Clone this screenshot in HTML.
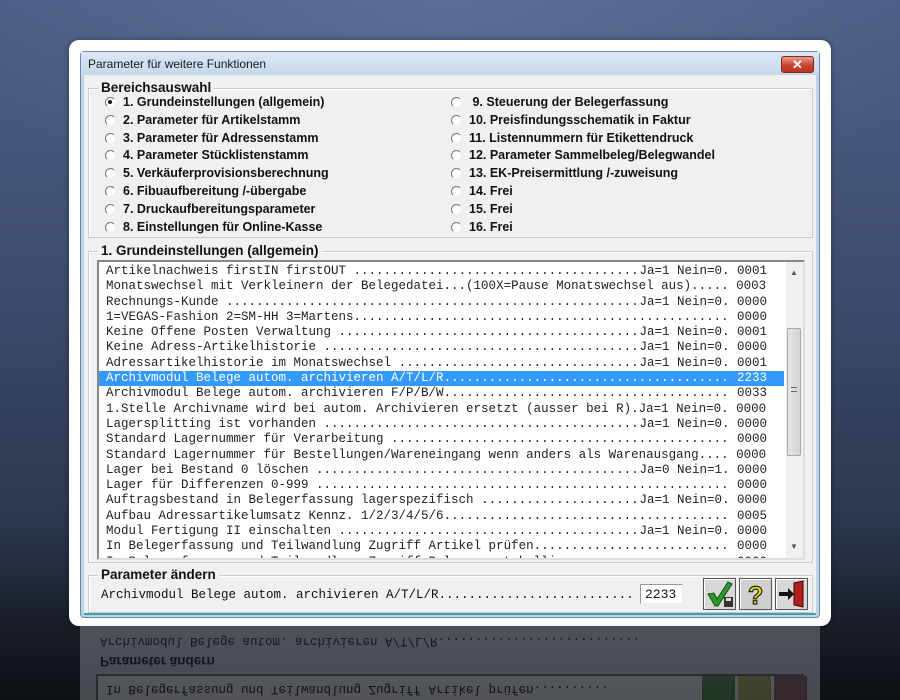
<!DOCTYPE html>
<html><head><meta charset="utf-8"><style>
*{margin:0;padding:0;box-sizing:border-box}
html,body{width:900px;height:700px;overflow:hidden}
body{background:linear-gradient(180deg,#4d5f86 0%,#3e4d6e 40%,#2c364d 75%,#1a1f2a 88%,#0e1014 100%);position:relative;font-family:"Liberation Sans",sans-serif}
.glow{position:absolute;left:0;top:0;width:900px;height:700px;background:radial-gradient(ellipse 500px 260px at 450px 0px,rgba(120,140,180,.35),rgba(0,0,0,0))}
.card{position:absolute;left:69px;top:40px;width:762px;height:586px;background:#fff;border-radius:10px;box-shadow:0 0 6px rgba(0,0,0,.4)}
.win{position:absolute;left:80px;top:51px;width:740px;height:567px;background:#bcd3e8;border:1px solid #6f8aa6;border-radius:4px}
.title{position:absolute;left:0;top:0;width:738px;height:23px;background:linear-gradient(#dce8f4,#c4d8ec);font-size:12px;color:#1a1a1a;padding:5px 7px}
.close{position:absolute;right:5px;top:4px;width:33px;height:17px;border-radius:3px;background:linear-gradient(#e8a08c,#c9452e 55%,#b8321c);border:1px solid #7a2a1e;color:#fff;font-size:13px;font-weight:bold;text-align:center;line-height:15px}
.body{position:absolute;left:3px;top:23px;width:732px;height:540px;background:#f0f0f0;border-bottom:2px solid #3aa0b0}
.grp{position:absolute;border:1px solid #c9cdd2;box-shadow:inset 1px 1px 0 #fff}
.leg{position:absolute;background:#f0f0f0;font-weight:bold;font-size:13.5px;color:#111;padding:0 3px}
.rad{position:absolute;font-size:12.5px;font-weight:bold;color:#111;white-space:nowrap}
.rad:before{content:"";position:absolute;left:-18px;top:2px;width:9px;height:9px;border-radius:50%;border:1px solid #777;border-right-color:#eee;border-bottom-color:#eee;background:#fff}
.rad.on:after{content:"";position:absolute;left:-15px;top:5px;width:4px;height:4px;border-radius:50%;background:#111}
.list{position:absolute;left:13px;top:185px;width:708px;height:300px;background:#fff;border:2px solid #888;border-right-color:#ddd;border-bottom-color:#ddd;overflow:hidden;padding-top:2px}
.r{display:flex;height:15.3px;line-height:15.3px;font-family:"Liberation Mono",monospace;font-size:12.5px;color:#222;padding-left:7px;width:668px;white-space:pre;overflow:hidden}
.r i{flex:1;overflow:hidden;font-style:normal}
.r.sel{background:#3399ff;color:#fff;width:685px;padding-right:17px}
.sb{position:absolute;right:0;top:0;width:17px;height:296px;background:#f0f0f0}
.thumb{position:absolute;left:1px;top:66px;width:14px;height:128px;background:linear-gradient(90deg,#e6e6e6,#d4d4d4);border:1px solid #a8a8a8;border-radius:2px}
.btn{position:absolute;width:33px;height:32px;border:1px solid #555;background:#d8d8d8;box-shadow:inset 1px 1px 0 #fff}
.refl{position:absolute;left:80px;top:626px;width:740px;height:74px;overflow:hidden;opacity:.3}
</style></head><body>
<div class="glow"></div>
<div class="card"></div>
<div class="refl"><div style="position:absolute;left:0;top:0;width:740px;height:74px;background:#c8ccd4"></div>
<div style="position:absolute;left:20px;top:8px;font-family:'Liberation Mono',monospace;font-size:12.5px;color:#111;transform:scaleY(-1)">Archivmodul Belege autom. archivieren A/T/L/R...........................</div>
<div style="position:absolute;left:20px;top:28px;font-size:13.5px;font-weight:bold;color:#111;transform:scaleY(-1)">Parameter ändern</div>
<div style="position:absolute;left:16px;top:48px;width:708px;height:30px;background:#eee;border:2px solid #666"></div>
<div style="position:absolute;left:26px;top:56px;font-family:'Liberation Mono',monospace;font-size:12.5px;color:#111;transform:scaleY(-1)">In Belegerfassung und Teilwandlung Zugriff Artikel prüfen..........</div>
<div style="position:absolute;left:622px;top:50px;width:33px;height:30px;background:#4a8a4a"></div>
<div style="position:absolute;left:658px;top:50px;width:33px;height:30px;background:#b0b060"></div>
<div style="position:absolute;left:694px;top:50px;width:33px;height:30px;background:#906060"></div>
</div>
<div class="win">
<div class="title">Parameter für weitere Funktionen<div class="close">✕</div></div>
<div class="body">
<div class="grp" style="left:4px;top:13px;width:725px;height:150px"></div>
<div class="leg" style="left:14px;top:5px">Bereichsauswahl</div>
<div class="rad on" style="left:39px;top:20px">1. Grundeinstellungen (allgemein)</div>
<div class="rad" style="left:39px;top:37.8px">2. Parameter für Artikelstamm</div>
<div class="rad" style="left:39px;top:55.6px">3. Parameter für Adressenstamm</div>
<div class="rad" style="left:39px;top:73.4px">4. Parameter Stücklistenstamm</div>
<div class="rad" style="left:39px;top:91.2px">5. Verkäuferprovisionsberechnung</div>
<div class="rad" style="left:39px;top:109px">6. Fibuaufbereitung /-übergabe</div>
<div class="rad" style="left:39px;top:126.8px">7. Druckaufbereitungsparameter</div>
<div class="rad" style="left:39px;top:144.6px">8. Einstellungen für Online-Kasse</div>
<div class="rad" style="left:385px;top:20px">&nbsp;9. Steuerung der Belegerfassung</div>
<div class="rad" style="left:385px;top:37.8px">10. Preisfindungsschematik in Faktur</div>
<div class="rad" style="left:385px;top:55.6px">11. Listennummern für Etikettendruck</div>
<div class="rad" style="left:385px;top:73.4px">12. Parameter Sammelbeleg/Belegwandel</div>
<div class="rad" style="left:385px;top:91.2px">13. EK-Preisermittlung /-zuweisung</div>
<div class="rad" style="left:385px;top:109px">14. Frei</div>
<div class="rad" style="left:385px;top:126.8px">15. Frei</div>
<div class="rad" style="left:385px;top:144.6px">16. Frei</div>

<div class="grp" style="left:4px;top:176px;width:725px;height:312px"></div>
<div class="leg" style="left:14px;top:168px">1. Grundeinstellungen (allgemein)</div>
<div class="list">
<div class="r">Artikelnachweis firstIN firstOUT <i>..............................................................</i>Ja=1 Nein=0. 0001</div>
<div class="r">Monatswechsel mit Verkleinern der Belegedatei...(100X=Pause Monatswechsel aus)..... 0003</div>
<div class="r">Rechnungs-Kunde <i>..............................................................</i>Ja=1 Nein=0. 0000</div>
<div class="r">1=VEGAS-Fashion 2=SM-HH 3=Martens<i>..............................................................</i> 0000</div>
<div class="r">Keine Offene Posten Verwaltung <i>..............................................................</i>Ja=1 Nein=0. 0001</div>
<div class="r">Keine Adress-Artikelhistorie <i>..............................................................</i>Ja=1 Nein=0. 0000</div>
<div class="r">Adressartikelhistorie im Monatswechsel <i>..............................................................</i>Ja=1 Nein=0. 0001</div>
<div class="r sel">Archivmodul Belege autom. archivieren A/T/L/R<i>..............................................................</i> 2233</div>
<div class="r">Archivmodul Belege autom. archivieren F/P/B/W<i>..............................................................</i> 0033</div>
<div class="r">1.Stelle Archivname wird bei autom. Archivieren ersetzt (ausser bei R).Ja=1 Nein=0. 0000</div>
<div class="r">Lagersplitting ist vorhanden <i>..............................................................</i>Ja=1 Nein=0. 0000</div>
<div class="r">Standard Lagernummer für Verarbeitung <i>..............................................................</i> 0000</div>
<div class="r">Standard Lagernummer für Bestellungen/Wareneingang wenn anders als Warenausgang.... 0000</div>
<div class="r">Lager bei Bestand 0 löschen <i>..............................................................</i>Ja=0 Nein=1. 0000</div>
<div class="r">Lager für Differenzen 0-999 <i>..............................................................</i> 0000</div>
<div class="r">Auftragsbestand in Belegerfassung lagerspezifisch <i>..............................................................</i>Ja=1 Nein=0. 0000</div>
<div class="r">Aufbau Adressartikelumsatz Kennz. 1/2/3/4/5/6<i>..............................................................</i> 0005</div>
<div class="r">Modul Fertigung II einschalten <i>..............................................................</i>Ja=1 Nein=0. 0000</div>
<div class="r">In Belegerfassung und Teilwandlung Zugriff Artikel prüfen<i>..............................................................</i> 0000</div>
<div class="r">In Belegerfassung und Teilwandlung Zugriff Belege protokollieren<i>..............................................................</i> 0000</div>
<div class="sb"><div style="position:absolute;left:4px;top:6px;font-size:8px;color:#555">▲</div><div class="thumb"><div style="position:absolute;left:3px;top:58px;width:6px;height:5px;border-top:1px solid #666;border-bottom:1px solid #666"></div></div><div style="position:absolute;left:4px;top:280px;font-size:8px;color:#555">▼</div></div>
</div>

<div class="grp" style="left:4px;top:500px;width:725px;height:38px"></div>
<div class="leg" style="left:14px;top:492px">Parameter ändern</div>
<div style="position:absolute;left:17px;top:513px;font-family:'Liberation Mono',monospace;font-size:12.5px;color:#111;white-space:pre">Archivmodul Belege autom. archivieren A/T/L/R..........................</div>
<div style="position:absolute;left:556px;top:509px;width:43px;height:20px;background:#fff;border:1px solid #999;border-right-color:#eee;border-bottom-color:#eee;font-family:'Liberation Mono',monospace;font-size:13px;padding:2px 4px;color:#111">2233</div>
<div class="btn" style="left:619px;top:503px"><svg width="31" height="30"><path d="M4 15 L10 14 L13 20 L24 3 L28 5 L14 27 L11 27 Z" fill="#2a9a2a" stroke="#145014" stroke-width="1"/><rect x="20" y="18" width="9" height="10" fill="#333"/><rect x="22" y="19" width="5" height="3" fill="#ddd"/></svg></div>
<div class="btn" style="left:655px;top:503px;background:#cfcfcf"><svg width="31" height="30"><text x="8" y="25" font-family="Liberation Sans" font-weight="bold" font-size="25" fill="#f2e600" stroke="#222" stroke-width="1.2">?</text></svg></div>
<div class="btn" style="left:691px;top:503px"><svg width="31" height="30"><path d="M18 4 L27 2 L27 28 L18 26 Z" fill="#b02020" stroke="#400" stroke-width="1"/><path d="M3 13 L12 13 L12 9 L18 15 L12 21 L12 17 L3 17 Z" fill="#111"/></svg></div>
</div>
</div>
</body></html>
